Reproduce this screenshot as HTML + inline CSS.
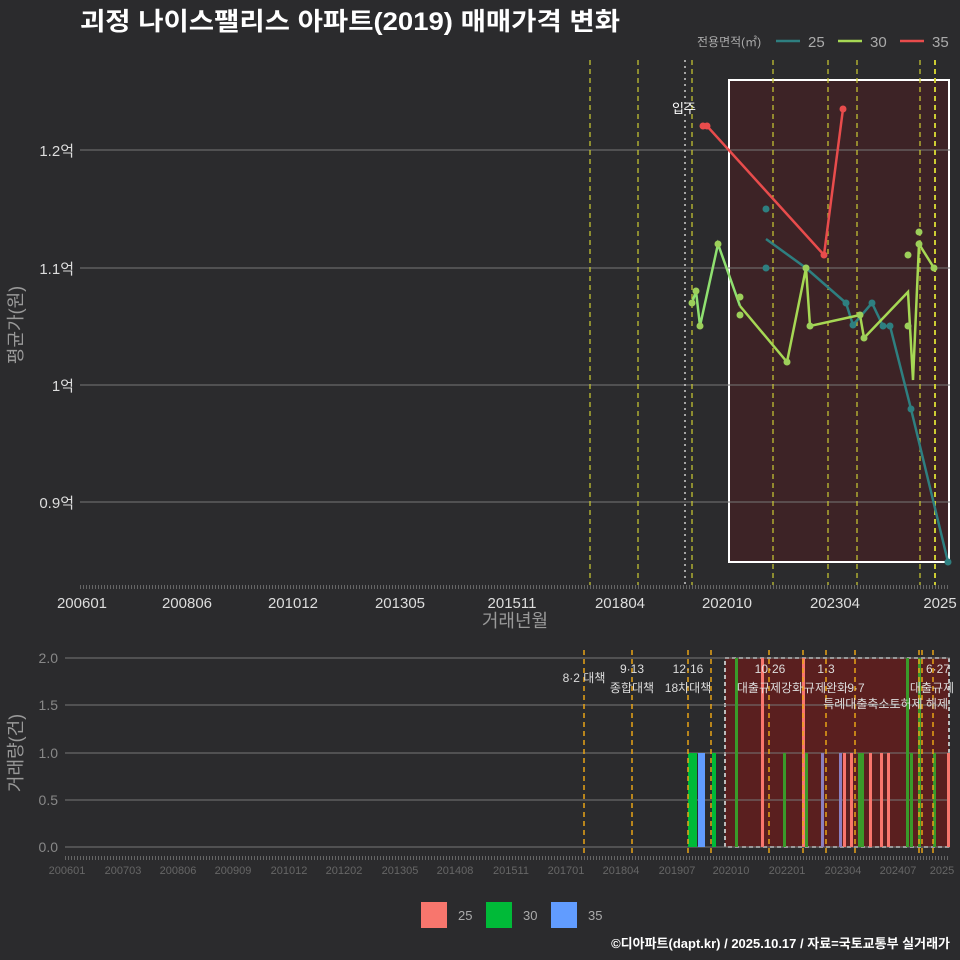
<!DOCTYPE html><html><head><meta charset="utf-8"><style>body{margin:0;background:#2b2b2d}svg{display:block}text{font-family:"Liberation Sans","Noto Sans CJK KR",sans-serif}</style></head><body>
<svg width="960" height="960" viewBox="0 0 960 960">
<rect width="960" height="960" fill="#2b2b2d"/>
<text x="80" y="30" fill="#fff" font-size="25" font-weight="bold" textLength="540" lengthAdjust="spacingAndGlyphs">괴정 나이스팰리스 아파트(2019) 매매가격 변화</text>
<text x="697" y="46" fill="#aaa" font-size="12">전용면적(㎡)</text>
<line x1="776" y1="41" x2="800" y2="41" stroke="#2e7f80" stroke-width="2.5"/><text x="808" y="47" fill="#aaa" font-size="15">25</text>
<line x1="838" y1="41" x2="862" y2="41" stroke="#a6d854" stroke-width="2.5"/><text x="870" y="47" fill="#aaa" font-size="15">30</text>
<line x1="900" y1="41" x2="924" y2="41" stroke="#e84c4c" stroke-width="2.5"/><text x="932" y="47" fill="#aaa" font-size="15">35</text>
<rect x="729" y="80" width="220" height="482" fill="#3d2326" stroke="#fff" stroke-width="2"/>
<g stroke="#777" stroke-width="1"><line x1="80" y1="150" x2="950" y2="150"/><line x1="80" y1="268" x2="950" y2="268"/><line x1="80" y1="385" x2="950" y2="385"/><line x1="80" y1="502" x2="950" y2="502"/></g>
<g fill="#ddd" font-size="15" text-anchor="end"><text x="74" y="156">1.2억</text><text x="74" y="274">1.1억</text><text x="74" y="391">1억</text><text x="74" y="508">0.9억</text></g>
<g stroke="#cc3" stroke-width="1.2" stroke-dasharray="5,4"><line x1="590" y1="60" x2="590" y2="585"/><line x1="638" y1="60" x2="638" y2="585"/><line x1="692" y1="60" x2="692" y2="585"/><line x1="773" y1="60" x2="773" y2="585"/><line x1="828" y1="60" x2="828" y2="585"/><line x1="857" y1="60" x2="857" y2="585"/><line x1="920" y1="60" x2="920" y2="585"/><line x1="935" y1="60" x2="935" y2="585" stroke-width="2"/></g>
<line x1="685" y1="60" x2="685" y2="585" stroke="#ccc" stroke-width="1.5" stroke-dasharray="2,4"/>
<text x="672" y="113" fill="#fff" font-size="13">입주</text>
<line x1="80" y1="587" x2="950" y2="587" stroke="#666" stroke-width="4" stroke-dasharray="1,2"/>
<g fill="#ddd" font-size="15" text-anchor="middle"><text x="82" y="608">200601</text><text x="187" y="608">200806</text><text x="293" y="608">201012</text><text x="400" y="608">201305</text><text x="512" y="608">201511</text><text x="620" y="608">201804</text><text x="727" y="608">202010</text><text x="835" y="608">202304</text><text x="940" y="608">2025</text></g>
<text x="515" y="627" fill="#999" font-size="18" text-anchor="middle">거래년월</text>
<text transform="translate(22,325) rotate(-90)" fill="#999" font-size="18" text-anchor="middle">평균가(원)</text>
<polyline points="703,126 707,126 824,255 843,109" fill="none" stroke="#e84c4c" stroke-width="2.5"/>
<g fill="#e84c4c"><circle cx="703" cy="126" r="3.5"/><circle cx="707" cy="126" r="3.5"/><circle cx="824" cy="255" r="3.5"/><circle cx="843" cy="109" r="3.5"/></g>
<polyline points="766,239 806,268 846,303 853,325 872,303 883,326 890,326 911,409 948,562" fill="none" stroke="#2e7f80" stroke-width="2.5"/>
<g fill="#2e7f80"><circle cx="766" cy="209" r="3.5"/><circle cx="766" cy="268" r="3.5"/><circle cx="806" cy="268" r="3.5"/><circle cx="846" cy="303" r="3.5"/><circle cx="853" cy="325" r="3.5"/><circle cx="872" cy="303" r="3.5"/><circle cx="883" cy="326" r="3.5"/><circle cx="890" cy="326" r="3.5"/><circle cx="911" cy="409" r="3.5"/><circle cx="948" cy="562" r="3.5"/></g>
<polyline points="740,306 787,362 806,268 810,326 860,315 864,338 908,292 913,380 919,244 934,268" fill="none" stroke="#a6d854" stroke-width="2.5"/>
<polyline points="692,303 696,291 700,326 718,244 740,306" fill="none" stroke="#8fe070" stroke-width="2.5"/>
<g fill="#9ccf5a"><circle cx="692" cy="303" r="3.5"/><circle cx="696" cy="291" r="3.5"/><circle cx="700" cy="326" r="3.5"/><circle cx="718" cy="244" r="3.5"/><circle cx="740" cy="297" r="3.5"/><circle cx="740" cy="315" r="3.5"/><circle cx="787" cy="362" r="3.5"/><circle cx="806" cy="268" r="3.5"/><circle cx="810" cy="326" r="3.5"/><circle cx="860" cy="315" r="3.5"/><circle cx="864" cy="338" r="3.5"/><circle cx="908" cy="255" r="3.5"/><circle cx="908" cy="326" r="3.5"/><circle cx="919" cy="232" r="3.5"/><circle cx="919" cy="244" r="3.5"/><circle cx="934" cy="268" r="3.5"/></g>
<rect x="725" y="658" width="224" height="189" fill="#5a1f1f" stroke="#bbb" stroke-width="2" stroke-dasharray="4,3"/>
<g stroke="#777" stroke-width="1"><line x1="65" y1="658" x2="950" y2="658"/><line x1="65" y1="705" x2="950" y2="705"/><line x1="65" y1="753" x2="950" y2="753"/><line x1="65" y1="800" x2="950" y2="800"/><line x1="65" y1="847" x2="950" y2="847"/></g>
<g fill="#888" font-size="14" text-anchor="end"><text x="58" y="663">2.0</text><text x="58" y="710">1.5</text><text x="58" y="758">1.0</text><text x="58" y="805">0.5</text><text x="58" y="852">0.0</text></g>
<text transform="translate(22,753) rotate(-90)" fill="#999" font-size="18" text-anchor="middle">거래량(건)</text>
<g fill="#00ba38"><rect x="688" y="753" width="9" height="94"/><rect x="712" y="753" width="4" height="94"/></g>
<rect x="698" y="753" width="7" height="94" fill="#619cff"/>
<g fill="#3a9a2a"><rect x="735" y="658" width="3" height="189"/><rect x="783" y="753" width="3" height="94"/><rect x="805" y="753" width="3" height="94"/><rect x="858" y="753" width="6" height="94"/><rect x="906" y="658" width="3" height="189"/><rect x="910" y="753" width="3" height="94"/><rect x="918" y="658" width="3" height="189"/><rect x="933" y="753" width="3" height="94"/></g>
<g fill="#f8766d"><rect x="761" y="658" width="3" height="189"/><rect x="802" y="658" width="3" height="189"/><rect x="843" y="753" width="3" height="94"/><rect x="850" y="753" width="3" height="94"/><rect x="869" y="753" width="3" height="94"/><rect x="880" y="753" width="3" height="94"/><rect x="887" y="753" width="3" height="94"/><rect x="947" y="753" width="3" height="94"/></g>
<g fill="#8a7fc0"><rect x="821" y="753" width="3" height="94"/><rect x="839" y="753" width="3" height="94"/></g>
<g stroke="#e8a317" stroke-width="1.5" stroke-dasharray="5,4"><line x1="584" y1="650" x2="584" y2="855"/><line x1="632" y1="650" x2="632" y2="855"/><line x1="688" y1="650" x2="688" y2="855"/><line x1="711" y1="650" x2="711" y2="855"/><line x1="769" y1="650" x2="769" y2="855"/><line x1="803" y1="650" x2="803" y2="855"/><line x1="826" y1="650" x2="826" y2="855"/><line x1="855" y1="650" x2="855" y2="855"/><line x1="919" y1="650" x2="919" y2="855"/><line x1="922" y1="650" x2="922" y2="855"/><line x1="933" y1="650" x2="933" y2="855"/></g>
<g fill="#ddd" font-size="12" text-anchor="middle"><text x="584" y="682">8·2 대책</text><text x="632" y="673">9·13</text><text x="632" y="692">종합대책</text><text x="688" y="673">12·16</text><text x="688" y="692">18차대책</text><text x="770" y="673">10·26</text><text x="770" y="692">대출규제강화</text><text x="826" y="673">1·3</text><text x="826" y="692">규제완화</text><text x="856" y="692">9·7</text><text x="938" y="673">6·27</text><text x="932" y="692">대출규제</text></g>
<text x="948" y="708" fill="#ddd" font-size="12" text-anchor="end">특례대출축소토허제 해제</text>
<line x1="65" y1="858" x2="950" y2="858" stroke="#666" stroke-width="4" stroke-dasharray="1,2"/>
<g fill="#666" font-size="11" text-anchor="middle"><text x="67" y="874">200601</text><text x="123" y="874">200703</text><text x="178" y="874">200806</text><text x="233" y="874">200909</text><text x="289" y="874">201012</text><text x="344" y="874">201202</text><text x="400" y="874">201305</text><text x="455" y="874">201408</text><text x="511" y="874">201511</text><text x="566" y="874">201701</text><text x="621" y="874">201804</text><text x="677" y="874">201907</text><text x="731" y="874">202010</text><text x="787" y="874">202201</text><text x="843" y="874">202304</text><text x="898" y="874">202407</text><text x="942" y="874">2025</text></g>
<rect x="421" y="902" width="26" height="26" fill="#f8766d"/><text x="458" y="920" fill="#aaa" font-size="13">25</text>
<rect x="486" y="902" width="26" height="26" fill="#00ba38"/><text x="523" y="920" fill="#aaa" font-size="13">30</text>
<rect x="551" y="902" width="26" height="26" fill="#619cff"/><text x="588" y="920" fill="#aaa" font-size="13">35</text>
<text x="950" y="948" fill="#fff" font-size="13" font-weight="bold" text-anchor="end">©디아파트(dapt.kr) / 2025.10.17 / 자료=국토교통부 실거래가</text>
</svg></body></html>
